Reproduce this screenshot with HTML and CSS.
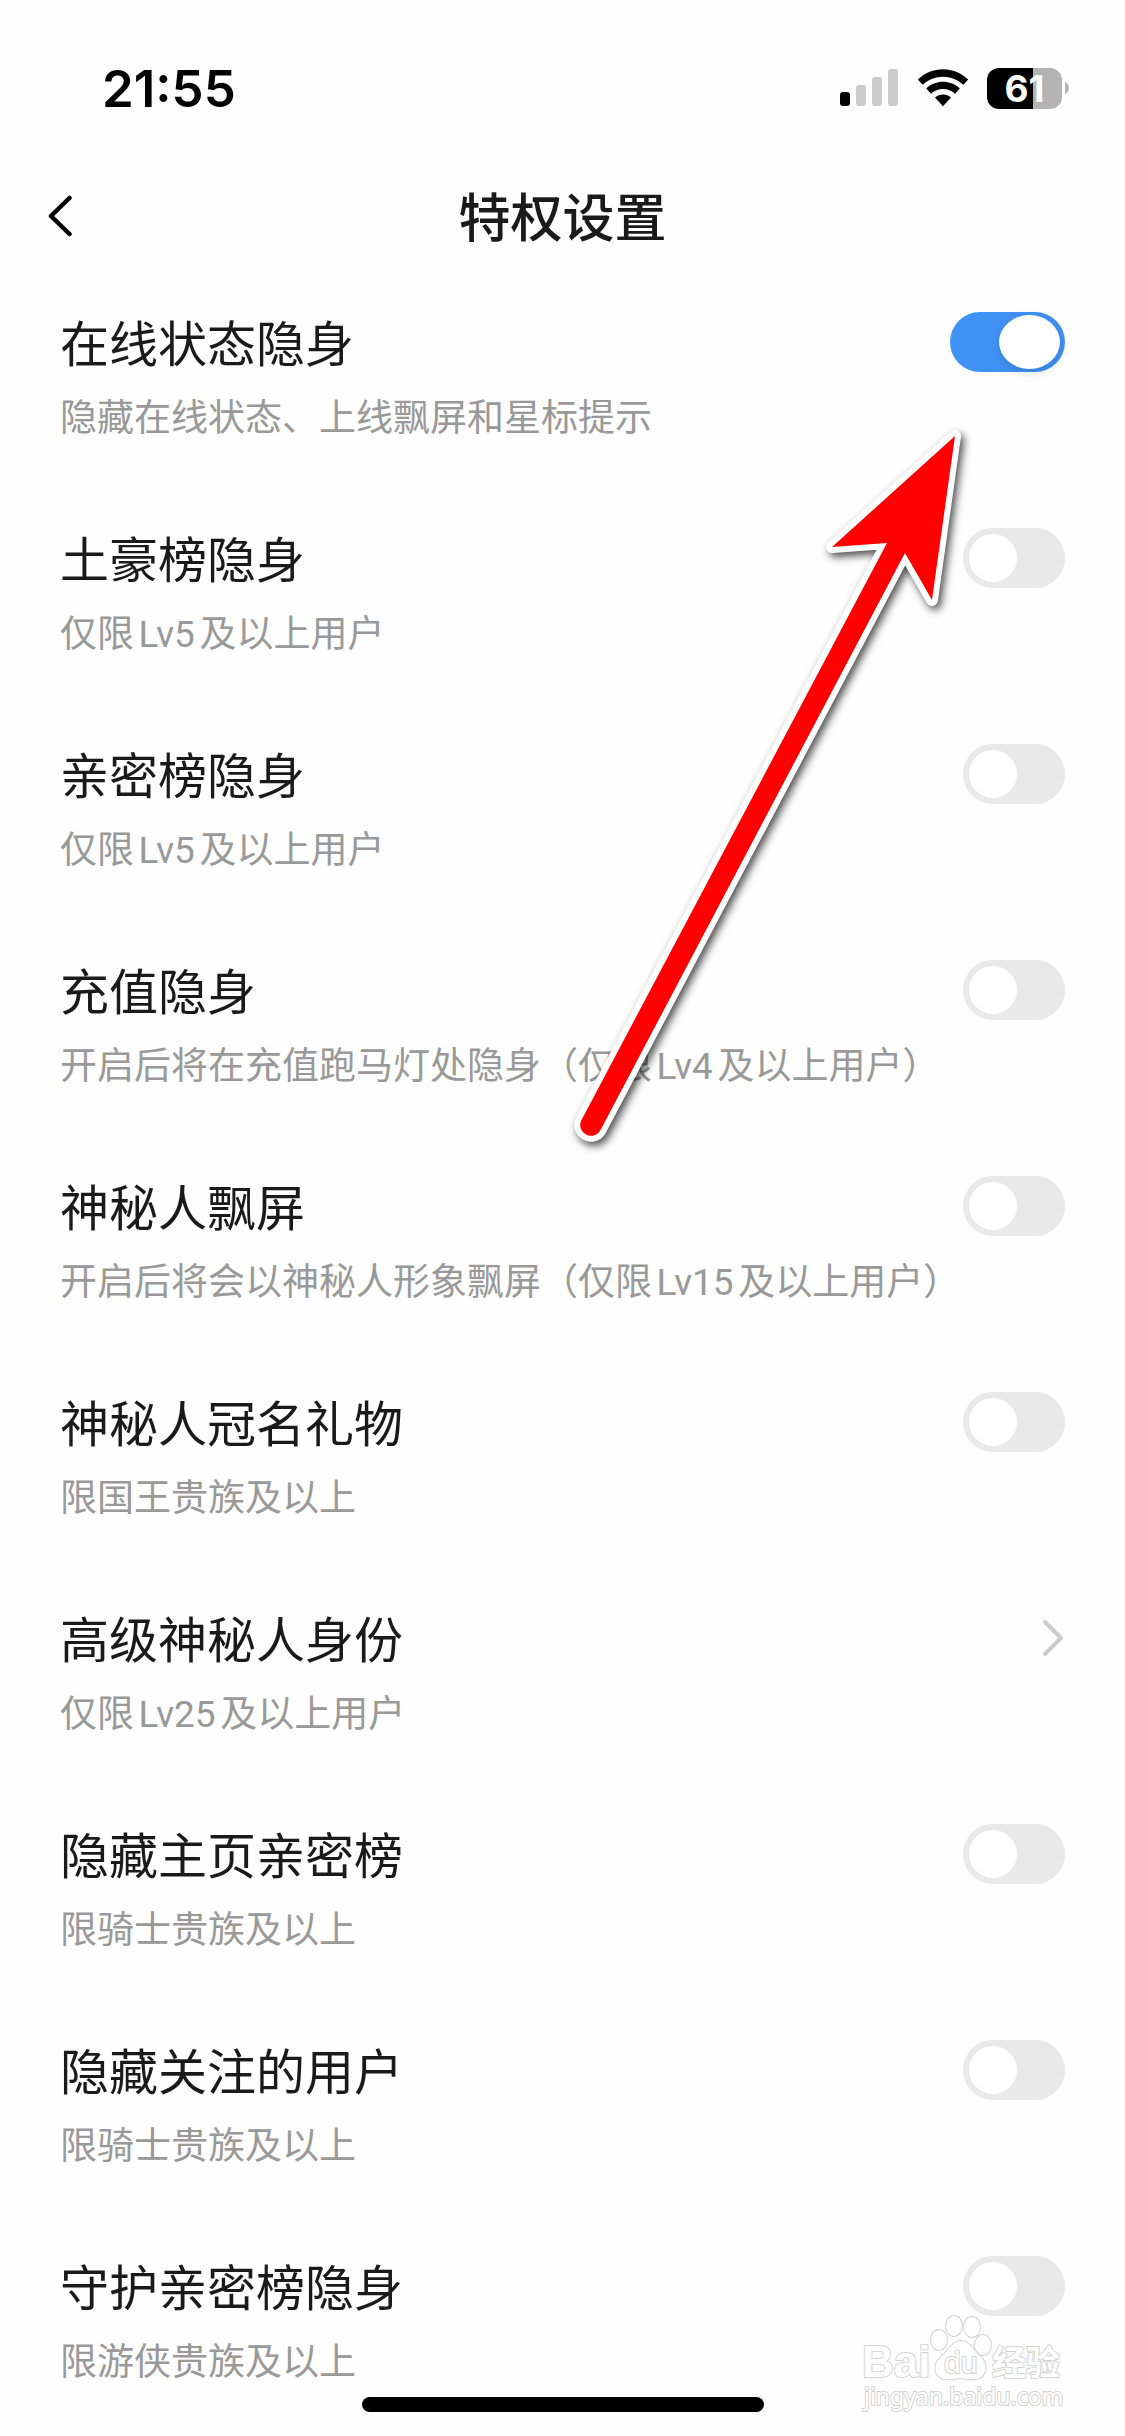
FILE: index.html
```
<!DOCTYPE html>
<html lang="zh-CN">
<head>
    <meta charset="UTF-8">
    <meta name="viewport" content="width=device-width, initial-scale=1.0">
    <title>特权设置</title>
    <link rel="stylesheet" href="styles.css">
</head>
<body>
    <div class="status-bar">
        <span class="clock">21:55</span>
        <div class="status-icons">
            <svg class="signal" width="58" height="38" viewBox="0 0 58 38">
                <rect x="0" y="23" width="10" height="14" rx="3" fill="#000"/>
                <rect x="16" y="16" width="10" height="21" rx="3" fill="#ccc"/>
                <rect x="32" y="8" width="10" height="29" rx="3" fill="#ccc"/>
                <rect x="48" y="0" width="10" height="37" rx="3" fill="#ccc"/>
            </svg>
            <svg class="wifi" width="52" height="38" viewBox="0 0 52 38">
                <path d="M.8 10.6C15-3.3 37-3.3 51.200 10.600L46.400 15.800C35 5 17 5 5.600 15.800Z"/>
                <path d="M9.200 19.500C18.500 10.600 33.500 10.600 42.800 19.500L38 24.700C31 18.500 21 18.500 14 24.700Z"/>
                <path d="M18 28.600C22.500 24.500 29.500 24.500 34 28.600L26 37.200Z"/>
            </svg>
            <div class="battery">
                <span class="battery-level">61</span>
                <svg width="4" height="12" viewBox="0 0 4 12"><path d="M0 0C5.200 2 5.200 10 0 12Z" fill="#b3b3b3"/></svg>
            </div>
        </div>
    </div>
    <header>
        <button class="back" aria-label="返回">
            <svg width="26" height="44" viewBox="0 0 26 44"><path d="M21.500 4L3 22L21.500 40" fill="none" stroke="#000" stroke-width="4.500" stroke-linecap="round" stroke-linejoin="round"/></svg>
        </button>
        <h1>特权设置</h1>
    </header>
    <main>
        <ul class="settings">
            <li>
                <label class="text" for="online"><span class="name">在线状态隐身</span><span class="desc">隐藏在线状态、上线飘屏和星标提示</span></label>
                <input class="switch" type="checkbox" id="online" checked>
            </li>
            <li>
                <label class="text" for="rich"><span class="name">土豪榜隐身</span><span class="desc">仅限Lv5及以上用户</span></label>
                <input class="switch" type="checkbox" id="rich">
            </li>
            <li>
                <label class="text" for="close"><span class="name">亲密榜隐身</span><span class="desc">仅限Lv5及以上用户</span></label>
                <input class="switch" type="checkbox" id="close">
            </li>
            <li>
                <label class="text" for="recharge"><span class="name">充值隐身</span><span class="desc">开启后将在充值跑马灯处隐身（仅限Lv4及以上用户）</span></label>
                <input class="switch" type="checkbox" id="recharge">
            </li>
            <li>
                <label class="text" for="banner"><span class="name">神秘人飘屏</span><span class="desc">开启后将会以神秘人形象飘屏（仅限Lv15及以上用户）</span></label>
                <input class="switch" type="checkbox" id="banner">
            </li>
            <li>
                <label class="text" for="gift"><span class="name">神秘人冠名礼物</span><span class="desc">限国王贵族及以上</span></label>
                <input class="switch" type="checkbox" id="gift">
            </li>
            <li>
                <a class="link" href="#identity">
                    <span class="text"><span class="name">高级神秘人身份</span><span class="desc">仅限Lv25及以上用户</span></span>
                    <svg class="chevron" width="24" height="40" viewBox="0 0 24 40"><path d="M4 4L20 20L4 36" fill="none" stroke="#ccc" stroke-width="4" stroke-linecap="round" stroke-linejoin="round"/></svg>
                </a>
            </li>
            <li>
                <label class="text" for="home"><span class="name">隐藏主页亲密榜</span><span class="desc">限骑士贵族及以上</span></label>
                <input class="switch" type="checkbox" id="home">
            </li>
            <li>
                <label class="text" for="follow"><span class="name">隐藏关注的用户</span><span class="desc">限骑士贵族及以上</span></label>
                <input class="switch" type="checkbox" id="follow">
            </li>
            <li>
                <label class="text" for="guard"><span class="name">守护亲密榜隐身</span><span class="desc">限游侠贵族及以上</span></label>
                <input class="switch" type="checkbox" id="guard">
            </li>
        </ul>
    </main>
    <footer>
        <div class="home-indicator"></div>
    </footer>

    <!-- pointer to the first switch -->
    <svg class="arrow" width="400" height="720" viewBox="570 426 400 720">
        <path d="M955 436L832 547L887 543L581 1121A10.800 10.800 0 0 0 600 1131L905 553L932 600Z" fill="none" stroke="#fff" stroke-width="12" stroke-linejoin="round"/>
        <path d="M955 436L832 547L887 543L581 1121A10.800 10.800 0 0 0 600 1131L905 553L932 600Z" fill="#f00"/>
    </svg>

    <svg class="watermark" width="208" height="102" viewBox="0 0 208 102">
        <g fill="#fff" stroke="#d4d4d4" stroke-width="2" stroke-linejoin="round" paint-order="stroke">
            <text class="wm-latin" x="2" y="65">Bai</text>
            <ellipse cx="79" cy="28" rx="8" ry="10"/>
            <ellipse cx="94" cy="14" rx="8" ry="10"/>
            <ellipse cx="112" cy="15" rx="8" ry="10"/>
            <ellipse cx="123" cy="33" rx="8" ry="10"/>
            <path d="M101 29C110 29 113 38 119 43C128 50 128 66 115 67C109 68 106 66 100 66C94 66 90 68 85 67C73 65 73 51 82 44C88 39 92 29 101 29Z"/>
            <text class="wm-du" x="84" y="61">du</text>
            <text class="wm-cjk" x="132" y="63">经验</text>
            <text class="wm-url" x="4" y="93">jingyan.baidu.com</text>
        </g>
    </svg>
</body>
</html>
```
FILE: styles.css
```
* {
    box-sizing: border-box;
}
body {
    font-family: Roboto, "Noto Sans CJK SC", sans-serif;
    margin: 0;
    min-height: 100vh;
    background-color: #fefefe;
    color: #1a1a1a;
    display: flex;
    flex-direction: column;
    position: relative;
}
.status-bar {
    display: flex;
    justify-content: space-between;
    align-items: center;
    height: 96px;
    margin-top: 40px;
    padding: 0 56px 0 102px;
}
.clock {
    font-family: Inter, sans-serif;
    font-size: 51px;
    font-weight: 600;
    color: #000;
}
.status-icons {
    display: flex;
    align-items: center;
}
.wifi {
    margin: 0 18px 0 19px;
}
.battery {
    display: flex;
    align-items: center;
    gap: 3px;
}
.battery-level {
    width: 75px;
    height: 41px;
    border-radius: 12px;
    background: linear-gradient(to right, #000 61%, #b3b3b3 61%);
    color: #fff;
    font-family: Inter, sans-serif;
    font-size: 37px;
    font-weight: 700;
    line-height: 41px;
    text-align: center;
}
header {
    display: grid;
    grid-template-columns: 80px 1fr 80px;
    align-items: center;
    height: 160px;
    padding: 0 48px;
}
.back {
    display: flex;
    padding: 0;
    border: none;
    background: none;
    cursor: pointer;
}
h1 {
    margin: 0;
    padding-bottom: 4px;
    font-size: 52px;
    font-weight: 500;
    text-align: center;
}
main {
    flex: 1;
    padding: 16px 60px 0;
}
.settings {
    list-style: none;
    margin: 0;
    padding: 0;
    display: flex;
    flex-direction: column;
    gap: 85px;
}
.settings li,
.link {
    display: flex;
    flex: 1;
    justify-content: space-between;
    align-items: flex-start;
}
.link {
    color: inherit;
    text-decoration: none;
}
.text {
    display: flex;
    flex-direction: column;
    gap: 19px;
    padding-top: 4px;
}
.name {
    font-size: 49px;
    line-height: 60px;
}
.desc {
    font-size: 37px;
    line-height: 48px;
    color: #999;
    text-autospace: normal;
}
.chevron {
    margin-top: 10px;
}
.switch {
    appearance: none;
    flex-shrink: 0;
    width: 102px;
    height: 60px;
    margin: 0;
    padding: 6px;
    border-radius: 30px;
    background-color: #e9e9e9;
    cursor: pointer;
    display: flex;
}
.switch::before {
    content: "";
    width: 48px;
    height: 48px;
    border-radius: 50%;
    background-color: #fff;
}
.switch:checked {
    width: 115px;
    padding: 3px 5px;
    background-color: #4192f7;
    justify-content: flex-end;
}
.switch:checked::before {
    width: 61px;
    height: 54px;
    box-shadow: 0 3px 12px rgba(0,0,0,0.15);
}
footer {
    display: flex;
    justify-content: center;
    padding: 10px 0 24px;
}
.home-indicator {
    width: 402px;
    height: 15px;
    border-radius: 8px;
    background-color: #000;
}
.arrow {
    position: absolute;
    top: 426px;
    right: 155px;
    overflow: visible;
    pointer-events: none;
    filter: drop-shadow(3px 4px 4px rgba(0,0,0,0.7));
}
.watermark {
    position: absolute;
    right: 57px;
    bottom: 22px;
    pointer-events: none;
}
.wm-latin {
    font: bold 44px "Liberation Sans", sans-serif;
}
.wm-du {
    font: 30px "Liberation Sans", sans-serif;
}
.wm-cjk {
    font: bold 34px "Noto Sans CJK SC", sans-serif;
}
.wm-url {
    font: 23px "Noto Sans", sans-serif;
}
```
